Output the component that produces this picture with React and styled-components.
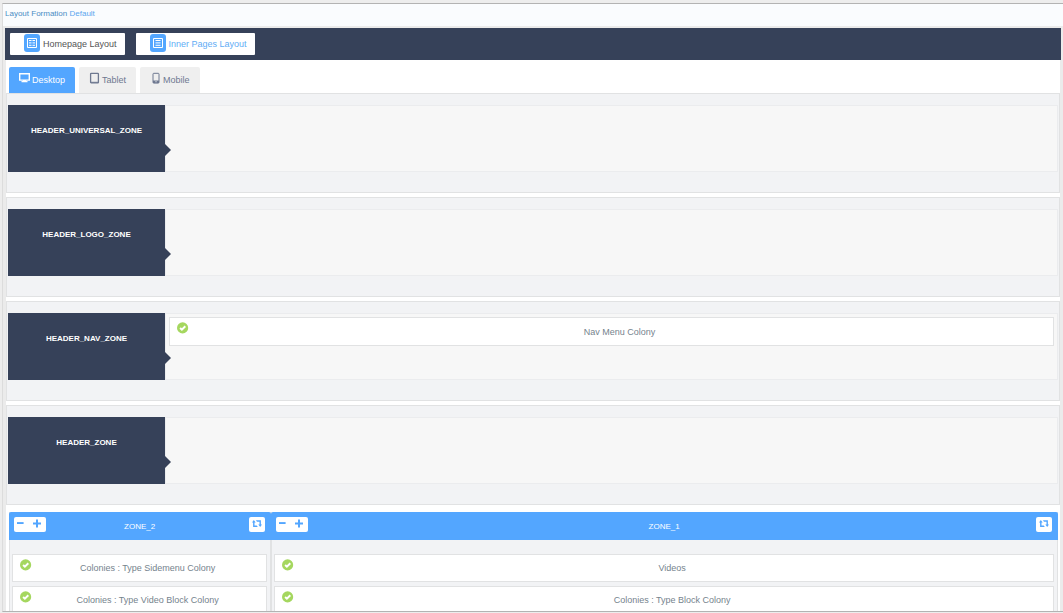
import React, { useState } from "react";
import styled, { createGlobalStyle } from "styled-components";

const navy = "#364159";
const blue = "#53a6ff";
const line = "#e1e2e3";
const panel = "#f2f3f5";

const GlobalStyle = createGlobalStyle`
  * { box-sizing: border-box; }
  body {
    margin: 0;
    background: #ededed;
    font-family: "Liberation Sans", Arial, sans-serif;
    font-size: 9px;
    line-height: 12px;
  }
  button { font: inherit; border: 0; padding: 0; margin: 0; cursor: pointer; }
  svg { display: block; flex: none; }
`;

const Frame = styled.div`
  height: 100vh;
  padding: 3px 0 1px 2px;
`;

const Scroller = styled.div`
  height: 100%;
  overflow: hidden;
  border: solid #b3b3b3;
  border-width: 1px 0;
  border-left: 1px solid #dcdcdc;
  background: #ebebeb;
`;

const Breadcrumb = styled.nav`
  height: 22px;
  padding: 4px 2px;
  background: #fafcfe;
  font-size: 8px;
  line-height: 11px;
  color: #4a8cc4;
  a { color: #5ba6ee; text-decoration: none; }
`;

const Content = styled.main`
  margin: 2px 2px 0;
`;

const Toolbar = styled.div`
  display: flex;
  gap: 11px;
  height: 32px;
  padding: 5px;
  background: ${navy};
`;

const LayoutButton = styled.button`
  display: flex;
  align-items: center;
  gap: 3px;
  height: 22px;
  padding: 0 8px 0 14px;
  border-radius: 1px;
  background: #fff;
  color: ${(p) => (p.$active ? "#555" : "#5fadf5")};
`;

const IconTile = styled.span`
  display: grid;
  place-items: center;
  width: 16px;
  height: 18px;
  margin-bottom: 2px;
  border-radius: 3px;
  background: ${blue};
`;

const Sheet = styled.div`
  margin: 0 1px;
  background: #fff;
`;

const Tabs = styled.div`
  display: flex;
  gap: 4px;
  padding: 7px 3px 0;
`;

const Tab = styled.button`
  display: flex;
  gap: 2px;
  height: 26px;
  padding: 5px 10px 0;
  border-radius: 2px 2px 0 0;
  background: ${(p) => (p.$active ? blue : "#efefef")};
  color: ${(p) => (p.$active ? "#fff" : "#6e7890")};
  span { padding-top: 2px; }
`;

const Zones = styled.div`
  display: grid;
  gap: 4px;
`;

const Zone = styled.section`
  display: flex;
  height: 100px;
  padding: 11px 1px 20px;
  border: 1px solid ${line};
  background: ${panel};
`;

const ZoneLabel = styled.h2`
  position: relative;
  flex: none;
  width: 157px;
  margin: 0;
  padding-top: 20px;
  background: ${navy};
  color: #fff;
  font-size: 8px;
  line-height: 11px;
  text-align: center;
  &::after {
    content: "";
    position: absolute;
    left: 100%;
    top: 39px;
    border: solid transparent;
    border-width: 6px 0 6px 6px;
    border-left-color: ${navy};
  }
`;

const ZoneArea = styled.div`
  flex: 1;
  padding: 3px;
  border: 1px solid #ebecee;
  background: #f7f7f7;
`;

const ColonyCard = styled.div`
  display: flex;
  align-items: center;
  height: ${(p) => (p.$tall ? "29px" : "28px")};
  padding: 0 7px;
  border: 1px solid ${line};
  background: #fff;
  color: #75838d;
  svg { margin-bottom: 7px; }
  span { flex: 1; padding-left: 4px; text-align: center; }
`;

const Columns = styled.div`
  display: grid;
  grid-template-columns: 1fr 3fr;
  padding: 7px 2px 0 3px;
`;

const Column = styled.section`
  border: solid ${line};
  border-width: 0 1px;
  background: ${panel};
`;

const ColumnHeader = styled.header`
  display: grid;
  grid-template-columns: 1fr auto 1fr;
  align-items: start;
  height: 28px;
  margin: 0 -1px;
  padding: 5px 6px 0 5px;
  border-radius: 2px 2px 0 0;
  background: ${blue};
  color: #fff;
`;

const ColumnTitle = styled.h2`
  margin: 4px 0 0;
  font-size: 8px;
  line-height: 11px;
  font-weight: normal;
`;

const ButtonGroup = styled.div`
  display: flex;
`;

const SmallButton = styled.button`
  display: grid;
  justify-items: center;
  align-content: start;
  justify-self: end;
  width: 16px;
  height: 15px;
  padding-top: 3px;
  border-radius: 2px;
  background: #fff;
`;

const CounterButton = styled(SmallButton)`
  width: ${(p) => (p.$wide ? "18px" : "14px")};
  padding-top: 2px;
  padding-right: ${(p) => (p.$wide ? "0" : "2px")};
  border-radius: ${(p) => (p.$wide ? "0 2px 2px 0" : "2px 0 0 2px")};
`;

const ColumnBody = styled.div`
  display: grid;
  gap: 4px;
  padding: 14px 3px 14px 2px;
`;

function GridIcon() {
  return (
    <svg width="10" height="10" viewBox="0 0 10 10" fill="none" stroke="#fff">
      <path d="M.5.5h9v9h-9z" />
      <path d="M2 2.5h2.5M2 4.9h2.5M2 7.3h2.5M5.5 2.5H8M5.5 4.9H8M5.5 7.3H8" />
    </svg>
  );
}

function ListIcon() {
  return (
    <svg width="10" height="10" viewBox="0 0 10 10" fill="none" stroke="#fff">
      <path d="M.5.5h9v9h-9zM2.5 2.5h5M2.5 4.9h5M2.5 7.3h5" />
    </svg>
  );
}

function DesktopIcon() {
  return (
    <svg width="11" height="12" viewBox="0 0 11 12">
      <path d="M.7 1.7h9.6v6.4H.7z" fill="none" stroke="#fff" strokeWidth="1.4" />
      <path d="M4 8h3v1h1.5v1.2h-6V9H4z" fill="#fff" />
    </svg>
  );
}

function TabletIcon() {
  return (
    <svg width="11" height="12" viewBox="0 0 11 12">
      <rect x="1.6" y="1.4" width="7.8" height="9.4" rx=".6" fill="none" stroke="#6e7890" strokeWidth="1.3" />
      <path d="M2 9.8h7v1H2z" fill="#6e7890" />
    </svg>
  );
}

function MobileIcon() {
  return (
    <svg width="11" height="12" viewBox="0 0 11 12">
      <rect x="3" y="1.3" width="6" height="9.8" rx=".8" fill="none" stroke="#6e7890" />
      <path d="M3 8.5h6V11H3z" fill="#6e7890" />
      <path d="M5.5 9.3h1v1h-1z" fill="#fff" />
    </svg>
  );
}

function CheckIcon() {
  return (
    <svg width="12" height="12" viewBox="0 0 12 12">
      <circle cx="5.6" cy="5.9" r="5.6" fill="#a5d75f" />
      <path d="M3.1 6l1.8 1.7 3.4-3.4" fill="none" stroke="#fff" strokeWidth="2" />
    </svg>
  );
}

function MinusIcon() {
  return (
    <svg width="7" height="8" viewBox="0 0 7 8">
      <path d="M0 3.1h6.6v1.9H0z" fill={blue} />
    </svg>
  );
}

function PlusIcon() {
  return (
    <svg width="8" height="9" viewBox="0 0 8 9">
      <path d="M3 .4h2v3h3v2H5v3H3v-3H0v-2h3z" fill={blue} />
    </svg>
  );
}

function RepeatIcon() {
  return (
    <svg width="10" height="8" viewBox="0 0 10 8">
      <path d="M1.8 0L3.7 2.4H2.5v3.1h2.2L5.8 7H1.1V2.4H0zM3.9.2h5v4.4H10L8.2 7 6.3 4.6h1.2V1.7H5z" fill={blue} />
    </svg>
  );
}

function Colony({ name, tall }) {
  return (
    <ColonyCard $tall={tall}>
      <CheckIcon />
      <span>{name}</span>
    </ColonyCard>
  );
}

const layouts = [
  { name: "Homepage Layout", Icon: GridIcon },
  { name: "Inner Pages Layout", Icon: ListIcon },
];

const devices = [
  { name: "Desktop", Icon: DesktopIcon },
  { name: "Tablet", Icon: TabletIcon },
  { name: "Mobile", Icon: MobileIcon },
];

const zones = [
  { name: "HEADER_UNIVERSAL_ZONE", colonies: [] },
  { name: "HEADER_LOGO_ZONE", colonies: [] },
  { name: "HEADER_NAV_ZONE", colonies: ["Nav Menu Colony"] },
  { name: "HEADER_ZONE", colonies: [] },
];

const columns = [
  { name: "ZONE_2", colonies: ["Colonies : Type Sidemenu Colony", "Colonies : Type Video Block Colony"] },
  { name: "ZONE_1", colonies: ["Videos", "Colonies : Type Block Colony"] },
];

export default function App() {
  const [layout, setLayout] = useState("Homepage Layout");
  const [device, setDevice] = useState("Desktop");
  return (
    <Frame>
      <GlobalStyle />
      <Scroller>
        <Breadcrumb>
          Layout Formation <a href="#default">Default</a>
        </Breadcrumb>
        <Content>
          <Toolbar>
            {layouts.map(({ name, Icon }) => (
              <LayoutButton key={name} $active={layout === name} onClick={() => setLayout(name)}>
                <IconTile><Icon /></IconTile>
                {name}
              </LayoutButton>
            ))}
          </Toolbar>
          <Sheet>
            <Tabs role="tablist">
              {devices.map(({ name, Icon }) => (
                <Tab key={name} role="tab" aria-selected={device === name} $active={device === name} onClick={() => setDevice(name)}>
                  <Icon />
                  <span>{name}</span>
                </Tab>
              ))}
            </Tabs>
            <Zones>
              {zones.map((zone) => (
                <Zone key={zone.name}>
                  <ZoneLabel>{zone.name}</ZoneLabel>
                  <ZoneArea>
                    {zone.colonies.map((name) => <Colony key={name} name={name} tall />)}
                  </ZoneArea>
                </Zone>
              ))}
            </Zones>
            <Columns>
              {columns.map((column) => (
                <Column key={column.name}>
                  <ColumnHeader>
                    <ButtonGroup>
                      <CounterButton aria-label="Narrower"><MinusIcon /></CounterButton>
                      <CounterButton $wide aria-label="Wider"><PlusIcon /></CounterButton>
                    </ButtonGroup>
                    <ColumnTitle>{column.name}</ColumnTitle>
                    <SmallButton aria-label="Swap"><RepeatIcon /></SmallButton>
                  </ColumnHeader>
                  <ColumnBody>
                    {column.colonies.map((name) => <Colony key={name} name={name} />)}
                  </ColumnBody>
                </Column>
              ))}
            </Columns>
          </Sheet>
        </Content>
      </Scroller>
    </Frame>
  );
}
